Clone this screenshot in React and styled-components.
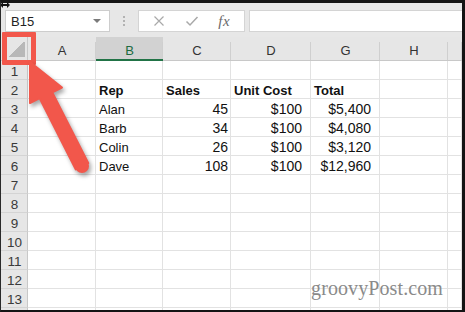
import React from "react";
import styled, { createGlobalStyle } from "styled-components";

const Global = createGlobalStyle`
  html, body { margin: 0; padding: 0; background: #fff; }
  body { font-family: "Liberation Sans", Arial, sans-serif; }
`;

const Frame = styled.div`
  position: relative;
  box-sizing: border-box;
  width: 465px;
  height: 312px;
  border-top: 3px solid #141414;
  border-right: 3px solid #141414;
  border-bottom: 2px solid #141414;
  border-left: 1px solid #2a2a2a;
  overflow: hidden;
  display: flex;
  flex-direction: column;
  background: #fff;
`;

const Toolbar = styled.div`
  height: 34px;
  flex: none;
  box-sizing: border-box;
  background: #e7e7e7;
  display: flex;
  align-items: flex-start;
  padding: 7px 0 0 4px;
`;

const NameBox = styled.div`
  box-sizing: border-box;
  width: 105px;
  height: 22px;
  background: #fff;
  border: 1px solid #cdcdcd;
  display: flex;
  align-items: center;
  justify-content: space-between;
  padding: 0 8px 0 5px;
  font-size: 13px;
  color: #222;
`;

const Caret = styled.span`
  width: 0;
  height: 0;
  border-left: 4px solid transparent;
  border-right: 4px solid transparent;
  border-top: 4px solid #7a7a7a;
`;

const Dots = styled.div`
  width: 28px;
  height: 22px;
  display: flex;
  flex-direction: column;
  align-items: center;
  justify-content: center;
  gap: 2px;
  span {
    width: 2px;
    height: 2px;
    background: #b2b2b2;
  }
`;

const Buttons = styled.div`
  box-sizing: border-box;
  width: 107px;
  height: 22px;
  background: #fff;
  border: 1px solid #d4d4d4;
  display: flex;
  align-items: center;
  justify-content: space-around;
  padding: 0 4px;
  margin-right: 4px;
`;

const Fx = styled.span`
  font-family: "Liberation Serif", "Times New Roman", serif;
  font-style: italic;
  font-size: 15px;
  color: #6a6a6a;
  letter-spacing: 0.5px;
`;

const Formula = styled.div`
  flex: 1;
  height: 22px;
  box-sizing: border-box;
  background: #fff;
  border: 1px solid #d4d4d4;
  border-right: none;
`;

const Sheet = styled.div`
  display: grid;
  grid-template-columns: 27px 68px 67px 68px 80px 69px 68px 1fr;
  grid-template-rows: 24px;
  grid-auto-rows: 19px;
  flex: 1;
`;

const Corner = styled.div`
  box-sizing: border-box;
  background: #e6e6e6;
  border-right: 1px solid #c8c8c8;
  border-bottom: 1px solid #c8c8c8;
  display: flex;
  justify-content: flex-end;
  align-items: flex-end;
  padding: 0 2px 3px 0;
`;

const Tri = styled.div`
  width: 16px;
  height: 16px;
  background: linear-gradient(to bottom right, transparent 50%, #b8b8b8 50%);
`;

const ColHead = styled.div`
  position: relative;
  box-sizing: border-box;
  background: ${(p) => (p.$sel ? "#d2d2d2" : "#e6e6e6")};
  color: ${(p) => (p.$sel ? "#1d6b3f" : "#333")};
  border-bottom: ${(p) => (p.$sel ? "2px solid #217346" : "1px solid #c8c8c8")};
  font-size: 13px;
  text-align: center;
  line-height: 16px;
  padding-top: 6px;
  &::after {
    content: "";
    position: absolute;
    right: 0;
    top: 5px;
    bottom: 0;
    width: 1px;
    background: #cfcfcf;
  }
`;

const RowHead = styled.div`
  box-sizing: border-box;
  background: #e6e6e6;
  border-right: 1px solid #c8c8c8;
  border-bottom: 1px solid #d4d4d4;
  font-size: 13.5px;
  color: #3a3a3a;
  text-align: center;
  line-height: 19px;
  padding-top: 1px;
  padding-left: 1px;
`;

const Cell = styled.div`
  box-sizing: border-box;
  border-right: 1px solid #e2e2e2;
  border-bottom: 1px solid #e2e2e2;
  font-size: ${(p) => (p.$num ? "14px" : "13px")};
  font-weight: ${(p) => (p.$bold ? 700 : 400)};
  color: #111;
  text-align: ${(p) => (p.$num ? "right" : "left")};
  padding: 1px ${(p) => p.$pr ?? 2}px 0 3px;
  line-height: 19px;
  white-space: nowrap;
  overflow: visible;
`;

const Highlight = styled.div`
  position: absolute;
  top: 29px;
  left: 1px;
  width: 34px;
  height: 33px;
  box-sizing: border-box;
  border: 5px solid #f2574b;
  border-radius: 1px;
`;

const ArrowSvg = styled.svg`
  position: absolute;
  top: -3px;
  left: -1px;
  pointer-events: none;
  filter: drop-shadow(2px 3px 2px rgba(0, 0, 0, 0.35));
`;

const Cursor = styled.svg`
  position: absolute;
  top: -3px;
  left: -1px;
`;

const Watermark = styled.div`
  position: absolute;
  right: 19px;
  bottom: 10px;
  font-family: "Liberation Serif", "Times New Roman", serif;
  font-size: 20px;
  color: #8a8a8a;
  letter-spacing: 0.1px;
`;

const cols = ["A", "B", "C", "D", "G", "H", ""];

const data = {
  2: { B: ["Rep", "b"], C: ["Sales", "b"], D: ["Unit Cost", "b"], G: ["Total", "b"] },
  3: { B: ["Alan"], C: ["45", "n"], D: ["$100", "c"], G: ["$5,400", "c"] },
  4: { B: ["Barb"], C: ["34", "n"], D: ["$100", "c"], G: ["$4,080", "c"] },
  5: { B: ["Colin"], C: ["26", "n"], D: ["$100", "c"], G: ["$3,120", "c"] },
  6: { B: ["Dave"], C: ["108", "n"], D: ["$100", "c"], G: ["$12,960", "c"] },
};

export default function App() {
  const rows = Array.from({ length: 14 }, (_, i) => i + 1);
  return (
    <>
      <Global />
      <Frame>
        <Toolbar>
          <NameBox>
            <span>B15</span>
            <Caret />
          </NameBox>
          <Dots>
            <span />
            <span />
            <span />
          </Dots>
          <Buttons>
            <svg width="12" height="12" viewBox="0 0 12 12">
              <path d="M1.5 1.5 L10.5 10.5 M10.5 1.5 L1.5 10.5" stroke="#a9a9a9" strokeWidth="1.2" fill="none" />
            </svg>
            <svg width="14" height="12" viewBox="0 0 14 12">
              <path d="M1.5 6.5 L5 10 L12.5 2" stroke="#a9a9a9" strokeWidth="1.5" fill="none" />
            </svg>
            <Fx>fx</Fx>
          </Buttons>
          <Formula />
        </Toolbar>
        <Sheet>
          <Corner>
            <Tri />
          </Corner>
          {cols.map((c, i) => (
            <ColHead key={i} $sel={c === "B"}>
              {c}
            </ColHead>
          ))}
          {rows.map((r) => (
            <React.Fragment key={r}>
              <RowHead>{r < 14 ? r : ""}</RowHead>
              {cols.map((c, i) => {
                const v = data[r] && data[r][c];
                const kind = v ? v[1] : undefined;
                return (
                  <Cell
                    key={i}
                    $bold={kind === "b"}
                    $num={kind === "n" || kind === "c"}
                    $pr={kind === "c" ? 8 : 2}
                  >
                    {v ? v[0] : ""}
                  </Cell>
                );
              })}
            </React.Fragment>
          ))}
        </Sheet>
        <Highlight />
        <ArrowSvg width="465" height="312" viewBox="0 0 465 312">
          <path
            d="M30 62 L62 87.5 L52.3 92.4 L88.3 163.1 L75.7 169.4 L39.7 98.2 L30 103 Z"
            fill="#f2574b"
            stroke="#f2574b"
            strokeWidth="2"
            strokeLinejoin="round"
          />
          <circle cx="82" cy="166" r="7" fill="#f2574b" />
        </ArrowSvg>
        <Cursor width="10" height="10" viewBox="0 0 10 10">
          <path d="M0 5 L3 2 L3 4 L7 4 L7 2 L10 5 L7 8 L7 6 L3 6 L3 8 Z" fill="#111" />
        </Cursor>
        <Watermark>groovyPost.com</Watermark>
      </Frame>
    </>
  );
}
